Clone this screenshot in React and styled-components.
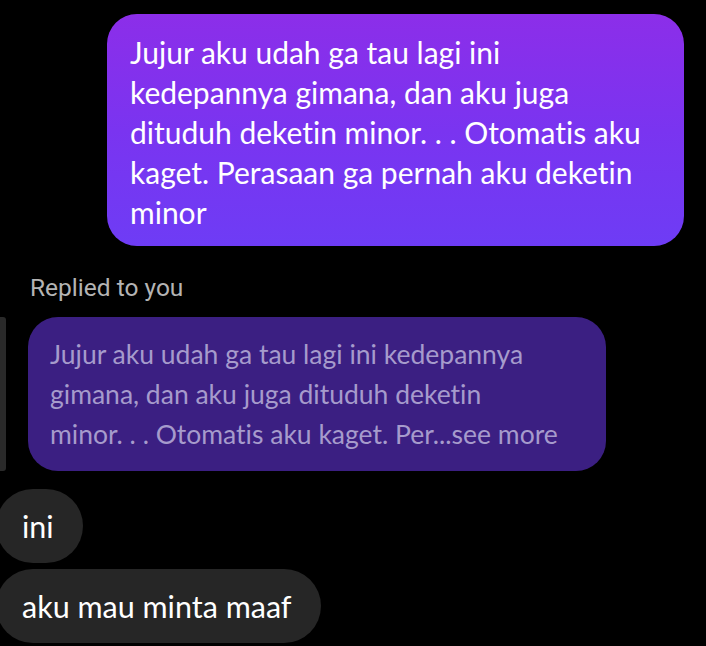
import React from 'react';
import styled, { createGlobalStyle } from 'styled-components';

const GlobalStyle = createGlobalStyle`
  html, body {
    margin: 0;
    padding: 0;
    background: #000;
  }
  body {
    font-family: "Lato", "Open Sans", sans-serif;
    font-variant-ligatures: none;
    overflow: hidden;
  }
`;

/* page */
const Thread = styled.div`
  width: 706px;
  height: 646px;
  background: #000;
  display: flex;
  flex-direction: column;
  padding-top: 14px;
  box-sizing: border-box;
  overflow: hidden;
`;

const SentBubble = styled.div`
  margin-left: 107px;
  width: 577px;
  box-sizing: border-box;
  padding: 18px 18px 14px 23px;
  border-radius: 30px;
  background: linear-gradient(180deg, #8c2ee9 0%, #7a34f0 50%, #6e3cf5 100%);
  color: #fff;
  font-size: 30px;
  line-height: 40px;
  white-space: pre-line;
`;

const ReplyLabel = styled.div`
  margin: 30px 0 0 30px;
  color: #b4b4b4;
  font-family: "Roboto", "Lato", sans-serif;
  font-size: 24.5px;
  line-height: 24px;
`;

const ReplyRow = styled.div`
  display: flex;
  align-items: stretch;
  gap: 22px;
  margin-top: 17px;
`;

const ReplyBar = styled.div`
  width: 6px;
  background: #2a2a2a;
  border-radius: 0 3px 3px 0;
`;

const QuotedBubble = styled.div`
  width: 578px;
  box-sizing: border-box;
  padding: 17px 16px 17px 22px;
  border-radius: 30px;
  background: #3b1f82;
  color: #a69bcc;
  font-size: 26.5px;
  line-height: 40px;
  white-space: pre-line;
`;

const Received = styled.div`
  display: flex;
  flex-direction: column;
  align-items: flex-start;
  gap: 6px;
  margin-top: 18px;
`;

const ReceivedBubble = styled.div`
  margin-left: -4px;
  height: 74px;
  padding: 0 29px 0 26px;
  display: flex;
  align-items: center;
  border-radius: 37px;
  background: #262626;
  color: #fff;
  font-size: 30.5px;
`;

const sentText = `Jujur aku udah ga tau lagi ini
kedepannya gimana, dan aku juga
dituduh deketin minor. . . Otomatis aku
kaget. Perasaan ga pernah aku deketin
minor`;

const quotedText = `Jujur aku udah ga tau lagi ini kedepannya
gimana, dan aku juga dituduh deketin
minor. . . Otomatis aku kaget. Per...see more`;

export default function App() {
  return (
    <>
      <GlobalStyle />
      <Thread>
        <SentBubble>{sentText}</SentBubble>
        <ReplyLabel>Replied to you</ReplyLabel>
        <ReplyRow>
          <ReplyBar />
          <QuotedBubble>{quotedText}</QuotedBubble>
        </ReplyRow>
        <Received>
          <ReceivedBubble>ini</ReceivedBubble>
          <ReceivedBubble>aku mau minta maaf</ReceivedBubble>
        </Received>
      </Thread>
    </>
  );
}
